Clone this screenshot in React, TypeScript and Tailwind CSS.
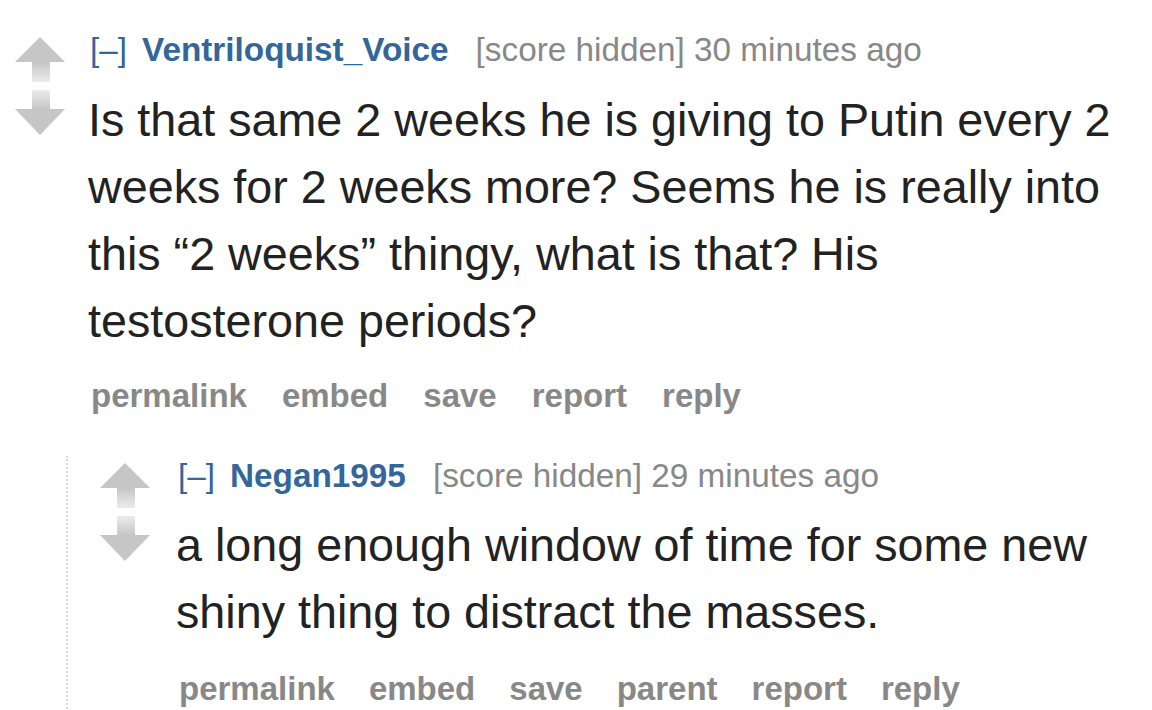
const font = { fontFamily: '"Liberation Sans", Arial, sans-serif' };

function Arrow({ dir }: { dir: "up" | "down" }) {
  const id = `stem-${dir}`;
  return (
    <svg width="50" height="46" viewBox="0 0 50 46" className="block">
      <defs>
        <linearGradient id={id} x1="0" y1="0" x2="0" y2="1">
          <stop offset="0" stopColor={dir === "up" ? "#c6c6c6" : "#ececec"} />
          <stop offset="1" stopColor={dir === "up" ? "#ececec" : "#c6c6c6"} />
        </linearGradient>
      </defs>
      {dir === "up" ? (
        <>
          <polygon points="25,0 50,25 0,25" fill="#c6c6c6" />
          <rect x="17" y="25" width="18" height="20" fill={`url(#${id})`} />
        </>
      ) : (
        <>
          <rect x="17" y="0" width="18" height="19" fill={`url(#${id})`} />
          <polygon points="0,19 50,19 25,45" fill="#c6c6c6" />
        </>
      )}
    </svg>
  );
}

function Votes() {
  return (
    <div className="flex w-[50px] shrink-0 flex-col gap-[7px] pt-[7px]">
      <Arrow dir="up" />
      <Arrow dir="down" />
    </div>
  );
}

function Tagline({ author, time }: { author: string; time: string }) {
  return (
    <div className="flex items-center h-[40px] text-[33.3px] leading-[40px] pl-[2px]">
      <span className="text-[#336699]">[–]</span>
      <span className="ml-[15px] font-bold text-[#336699]">{author}</span>
      <span className="ml-[27px] text-[#888888]">[score hidden] {time}</span>
    </div>
  );
}

function Buttons({ items, gap }: { items: string[]; gap: string }) {
  return (
    <div className={`flex h-[40px] items-center pl-[3px] text-[33px] font-bold leading-[40px] text-[#888888] ${gap}`}>
      {items.map((b) => (
        <span key={b}>{b}</span>
      ))}
    </div>
  );
}

export default function App() {
  return (
    <div className="h-[710px] w-[1152px] overflow-hidden bg-white" style={font}>
      <div className="flex pl-[15px] pt-[30px]">
        <Votes />
        <div className="ml-[23px] flex-1">
          <Tagline author="Ventriloquist_Voice" time="30 minutes ago" />
          <div className="mt-[17px] text-[46.7px] leading-[67px] text-[#222222]">
            <p>Is that same 2 weeks he is giving to Putin every 2</p>
            <p>weeks for 2 weeks more? Seems he is really into</p>
            <p>this “2 weeks” thingy, what is that? His</p>
            <p>testosterone periods?</p>
          </div>
          <div className="mt-[21px]">
            <Buttons gap="gap-[35px]" items={["permalink", "embed", "save", "report", "reply"]} />
          </div>
        </div>
      </div>
      <div className="ml-[66px] mt-[40px] flex border-l-2 border-dotted border-[#d8d6fa] pl-[32px]">
        <Votes />
        <div className="ml-[26px] flex-1">
          <Tagline author="Negan1995" time="29 minutes ago" />
          <div className="mt-[16px] text-[46.7px] leading-[67px] text-[#222222]">
            <p>a long enough window of time for some new</p>
            <p>shiny thing to distract the masses.</p>
          </div>
          <div className="mt-[23px] pb-[40px]">
            <Buttons gap="gap-[34px]" items={["permalink", "embed", "save", "parent", "report", "reply"]} />
          </div>
        </div>
      </div>
    </div>
  );
}
